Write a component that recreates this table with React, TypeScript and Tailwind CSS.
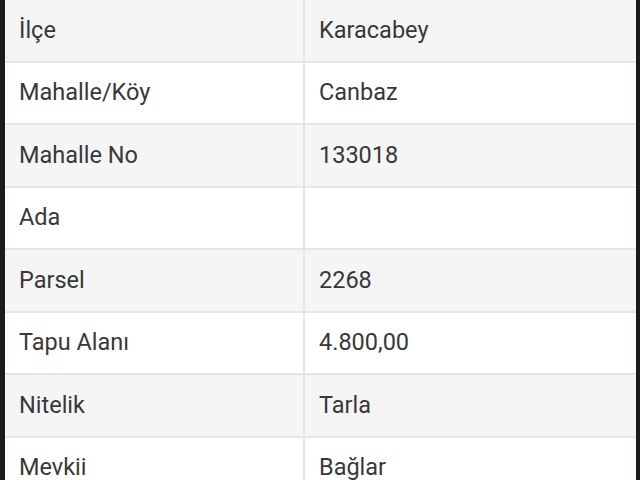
const rows: [string, string][] = [
  ["İlçe", "Karacabey"],
  ["Mahalle/Köy", "Canbaz"],
  ["Mahalle No", "133018"],
  ["Ada", ""],
  ["Parsel", "2268"],
  ["Tapu Alanı", "4.800,00"],
  ["Nitelik", "Tarla"],
  ["Mevkii", "Bağlar"],
];

const App = () => {
  return (
    <div className="w-[640px] h-[480px] overflow-hidden bg-[#1e1a1a] flex">
      <div className="ml-[5px] w-[631px] bg-white font-['Roboto',sans-serif] text-[23.5px] text-[#383838]">
        {rows.map(([label, value], i) => (
          <div
            key={label}
            className={`flex h-[62.5px] border-b-2 border-[#e6e6e6] ${i % 2 === 0 ? "bg-[#f5f5f5]" : "bg-white"}`}
          >
            <div className="w-[300px] shrink-0 flex items-center pl-[14px] border-r-2 border-[#e6e6e6]">{label}</div>
            <div className="flex-1 flex items-center pl-[14px]">{value}</div>
          </div>
        ))}
      </div>
    </div>
  );
};

export default App;
